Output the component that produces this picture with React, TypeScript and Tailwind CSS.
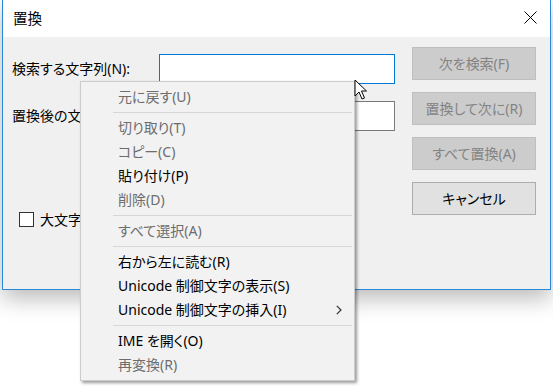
import React from "react";

const FONT = {
  fontFamily: '"Noto Sans","Noto Sans CJK JP",sans-serif',
};

type Item = { label: string; disabled?: boolean; sub?: boolean } | "sep";

const items: Item[] = [
  { label: "元に戻す(U)", disabled: true },
  "sep",
  { label: "切り取り(T)", disabled: true },
  { label: "コピー(C)", disabled: true },
  { label: "貼り付け(P)" },
  { label: "削除(D)", disabled: true },
  "sep",
  { label: "すべて選択(A)", disabled: true },
  "sep",
  { label: "右から左に読む(R)" },
  { label: "Unicode 制御文字の表示(S)" },
  { label: "Unicode 制御文字の挿入(I)", sub: true },
  "sep",
  { label: "IME を開く(O)" },
  { label: "再変換(R)", disabled: true },
];

function DisabledButton({ children }: { children: React.ReactNode }) {
  return (
    <div className="h-[33px] w-[124px] border border-[#bfbfbf] bg-[#cccccc] text-[#838383] flex items-center justify-center text-[14px]">
      {children}
    </div>
  );
}

export default function App() {
  return (
    <div
      className="relative w-[553px] h-[388px] bg-white overflow-hidden text-black [font-feature-settings:'palt']"
      style={FONT}
    >
      {/* Dialog window */}
      <div className="ml-[2px] w-[549px] h-[290px] flex flex-col border-l border-r border-b border-[#2b88d8] shadow-[0_8px_22px_rgba(0,0,0,0.28)]">
        <div className="h-[37px] bg-white flex items-center justify-between pl-[10px] pr-[13px]">
          <span className="text-[14.5px] leading-none">置換</span>
          <svg width="13" height="13" viewBox="0 0 13 13" className="mt-[-2px]">
            <path d="M0.5 0.5 L12.5 12.5 M12.5 0.5 L0.5 12.5" stroke="#000" strokeWidth="1" fill="none" />
          </svg>
        </div>
        <div className="flex-1 bg-[#f0f0f0] flex">
          <div className="w-[392px] pl-[9px] flex flex-col">
            <div className="mt-[17px] flex items-center h-[30px]">
              <span className="w-[147px] text-[14px] leading-none">検索する文字列(N):</span>
              <div className="w-[236px] h-[30px] bg-white border border-[#0078d7]" />
            </div>
            <div className="mt-[17px] flex items-center h-[30px]">
              <span className="w-[147px] text-[14px] leading-none whitespace-nowrap">置換後の文字列(P):</span>
              <div className="w-[236px] h-[30px] bg-white border border-[#7a7a7a]" />
            </div>
            <div className="mt-[81px] ml-[7px] flex items-center gap-[6px]">
              <div className="w-[15px] h-[15px] bg-white border border-[#333333]" />
              <span className="text-[14px] leading-none">大文字と小文字を区別する(C)</span>
            </div>
          </div>
          <div className="ml-[17px] mt-[10px] flex flex-col gap-[12px]">
            <DisabledButton>次を検索(F)</DisabledButton>
            <DisabledButton>置換して次に(R)</DisabledButton>
            <DisabledButton>すべて置換(A)</DisabledButton>
            <div className="h-[33px] w-[124px] border border-[#adadad] bg-[#e1e1e1] flex items-center justify-center text-[14px]">
              キャンセル
            </div>
          </div>
        </div>
      </div>

      {/* Context menu */}
      <div className="absolute left-[80px] top-[81px] w-[275px] border border-[#cccccc] bg-[#f2f2f2] py-[3px] shadow-[2px_2px_3px_rgba(0,0,0,0.4)]">
        {items.map((it, i) =>
          it === "sep" ? (
            <div key={i} className="h-[7px] flex items-center pl-[32px] pr-[2px]">
              <div className="h-px w-full bg-[#d7d7d7]" />
            </div>
          ) : (
            <div
              key={i}
              className={`h-[24px] pl-[37px] pr-[12px] flex items-center justify-between text-[14px] leading-none whitespace-nowrap ${
                it.disabled ? "text-[#6d6d6d]" : "text-black"
              }`}
            >
              <span>{it.label}</span>
              {it.sub && (
                <svg width="6" height="10" viewBox="0 0 6 10">
                  <path d="M0.8 0.8 L5 5 L0.8 9.2" stroke="#333" strokeWidth="1.2" fill="none" />
                </svg>
              )}
            </div>
          )
        )}
      </div>

      {/* Mouse cursor */}
      <svg className="absolute left-[354px] top-[79px]" width="14" height="21" viewBox="0 0 14 21">
        <path
          d="M1 1 L1 17 L5 13 L8 20 L10.5 19 L7.5 12 L12.5 12 Z"
          fill="#fff"
          stroke="#000"
          strokeWidth="1"
          strokeLinejoin="miter"
        />
      </svg>
    </div>
  );
}
